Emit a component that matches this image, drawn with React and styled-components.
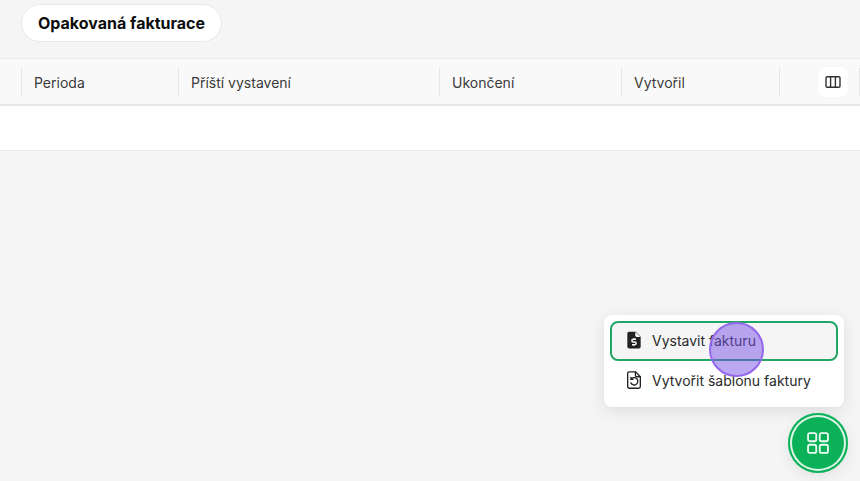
import React from "react";
import styled, { createGlobalStyle } from "styled-components";

const GlobalStyle = createGlobalStyle`
  html, body {
    margin: 0;
    padding: 0;
    height: 100%;
    overflow: hidden;
    background-color: #f5f5f5;
    font-family: "Inter", "Liberation Sans", sans-serif;
  }
`;

const Page = styled.div`
  position: relative;
  width: 860px;
  height: 481px;
  overflow: hidden;
  background-color: #f5f5f5;
`;

const TitleRow = styled.div`
  display: flex;
  align-items: flex-start;
  padding: 4px 0 0 21px;
  height: 58px;
  box-sizing: border-box;
`;

const TitlePill = styled.div`
  display: flex;
  align-items: center;
  height: 38px;
  box-sizing: border-box;
  padding: 0 16px;
  background-color: #fff;
  border: 1px solid #e9e9e9;
  border-radius: 19px;
  font-size: 16px;
  font-weight: 700;
  color: #0d0d0d;
`;

const HeaderRow = styled.div`
  display: flex;
  align-items: center;
  height: 48px;
  box-sizing: border-box;
  padding-left: 21px;
  padding-top: 1px;
  background-color: #f9f9f9;
  border-top: 1px solid #e8e8e8;
  border-bottom: 2px solid #e6e6e6;
`;

const HeaderCell = styled.div`
  display: flex;
  align-items: center;
  width: ${(p) => p.$width}px;
  height: 28px;
  box-sizing: border-box;
  padding-left: 12px;
  border-left: 1px solid #e6e6e6;
  font-size: 14px;
  color: #3a3a3a;
`;

const ActionCell = styled.div`
  display: flex;
  align-items: center;
  justify-content: flex-end;
  width: 81px;
  height: 28px;
  box-sizing: border-box;
  padding-right: 11px;
  border-left: 1px solid #e6e6e6;
  border-right: 1px solid #e6e6e6;
`;

const ColumnsButton = styled.button`
  display: flex;
  align-items: center;
  justify-content: center;
  flex-shrink: 0;
  width: 30px;
  height: 30px;
  padding: 0;
  border: none;
  border-radius: 7px;
  background-color: #fff;
  color: #333;
  box-shadow: 0 0 3px rgba(0, 0, 0, 0.03);
`;

const EmptyRow = styled.div`
  height: 45px;
  box-sizing: border-box;
  background-color: #fff;
  border-bottom: 1px solid #e8e8e8;
`;

const Menu = styled.div`
  position: absolute;
  left: 604px;
  top: 315px;
  width: 240px;
  height: 92px;
  box-sizing: border-box;
  padding: 6px;
  display: flex;
  flex-direction: column;
  background-color: #fff;
  border-radius: 8px;
  box-shadow: 0 4px 16px rgba(0, 0, 0, 0.1);
`;

const MenuItem = styled.div`
  display: flex;
  align-items: center;
  gap: 8px;
  height: 40px;
  box-sizing: border-box;
  padding: 0 0 2px 12px;
  border-radius: 8px;
  border: 2px solid ${(p) => (p.$active ? "#22a565" : "transparent")};
  background-color: ${(p) => (p.$active ? "#f5f5f5" : "#fff")};
  font-size: 14px;
  color: #2a2a2a;
`;

const Fab = styled.div`
  position: absolute;
  left: 788px;
  top: 413px;
  width: 60px;
  height: 60px;
  box-sizing: border-box;
  display: flex;
  align-items: center;
  justify-content: center;
  border-radius: 50%;
  background-color: #0bb159;
  box-shadow: inset 0 0 0 2px #0bb159, inset 0 0 0 4px #dff5e8,
    0 4px 14px rgba(0, 0, 0, 0.08);
`;

const ClickMark = styled.div`
  position: absolute;
  left: 709px;
  top: 322px;
  width: 55px;
  height: 55px;
  box-sizing: border-box;
  border-radius: 50%;
  background-color: rgba(120, 80, 230, 0.5);
  border: 2px solid #9468ea;
`;

const columns = [
  { label: "Perioda", width: 157 },
  { label: "Příští vystavení", width: 261 },
  { label: "Ukončení", width: 182 },
  { label: "Vytvořil", width: 158 },
];

const ColumnsIcon = () => (
  <svg width="16" height="16" viewBox="0 0 16 16" fill="none" stroke="currentColor" strokeWidth="1.4">
    <rect x="1" y="2.7" width="14" height="10.6" rx="1.2" />
    <path d="M5.6 2.7v10.6M10.4 2.7v10.6" />
  </svg>
);

const InvoiceIcon = () => (
  <svg width="20" height="20" viewBox="0 0 18 18">
    <path
      fill="#222"
      d="M4.5 1.5h6L15 6v9a1.6 1.6 0 0 1-1.6 1.6H4.6A1.6 1.6 0 0 1 3 15V3a1.5 1.5 0 0 1 1.5-1.5z"
    />
    <path fill="#fff" d="M10.2 1.8 14.7 6.2h-3.3a1.2 1.2 0 0 1-1.2-1.2z" />
    <path
      fill="none"
      stroke="#fff"
      strokeWidth="1.3"
      d="M10.8 8.4H8.3a1.1 1.1 0 0 0 0 2.4h1.4a1.1 1.1 0 0 1 0 2.4H7.2M9 7.4v1M9 13.2v1"
    />
  </svg>
);

const TemplateIcon = () => (
  <svg width="20" height="20" viewBox="0 0 18 18" fill="none" stroke="#222" strokeWidth="1.2" strokeLinecap="round" strokeLinejoin="round">
    <path d="M4.6 1.7h5.9l4.2 4.3v8.8a1.6 1.6 0 0 1-1.6 1.6H4.9a1.6 1.6 0 0 1-1.6-1.6V3a1.4 1.4 0 0 1 1.3-1.3z" />
    <path d="M10.3 1.9v3a1.2 1.2 0 0 0 1.2 1.2h3" />
    <path d="M6.4 8.4a3.3 3.3 0 1 1-.2 3.2M6.2 6.6v1.9h1.9" />
  </svg>
);

const GridIcon = () => (
  <svg width="24" height="24" viewBox="0 0 24 24" fill="none" stroke="#ecfbf2" strokeWidth="1.8">
    <rect x="2.05" y="2.05" width="8.2" height="8.2" rx="1.8" />
    <rect x="13.75" y="2.05" width="8.2" height="8.2" rx="1.8" />
    <rect x="2.05" y="13.75" width="8.2" height="8.2" rx="1.8" />
    <rect x="13.75" y="13.75" width="8.2" height="8.2" rx="1.8" />
  </svg>
);

const App = () => {
  return (
    <Page>
      <GlobalStyle />
      <TitleRow>
        <TitlePill>Opakovaná fakturace</TitlePill>
      </TitleRow>
      <HeaderRow>
        {columns.map((col) => (
          <HeaderCell key={col.label} $width={col.width}>
            {col.label}
          </HeaderCell>
        ))}
        <ActionCell>
          <ColumnsButton>
            <ColumnsIcon />
          </ColumnsButton>
        </ActionCell>
      </HeaderRow>
      <EmptyRow />
      <Menu>
        <MenuItem $active>
          <InvoiceIcon />
          Vystavit fakturu
        </MenuItem>
        <MenuItem>
          <TemplateIcon />
          Vytvořit šablonu faktury
        </MenuItem>
      </Menu>
      <Fab>
        <GridIcon />
      </Fab>
      <ClickMark />
    </Page>
  );
};

export default App;
